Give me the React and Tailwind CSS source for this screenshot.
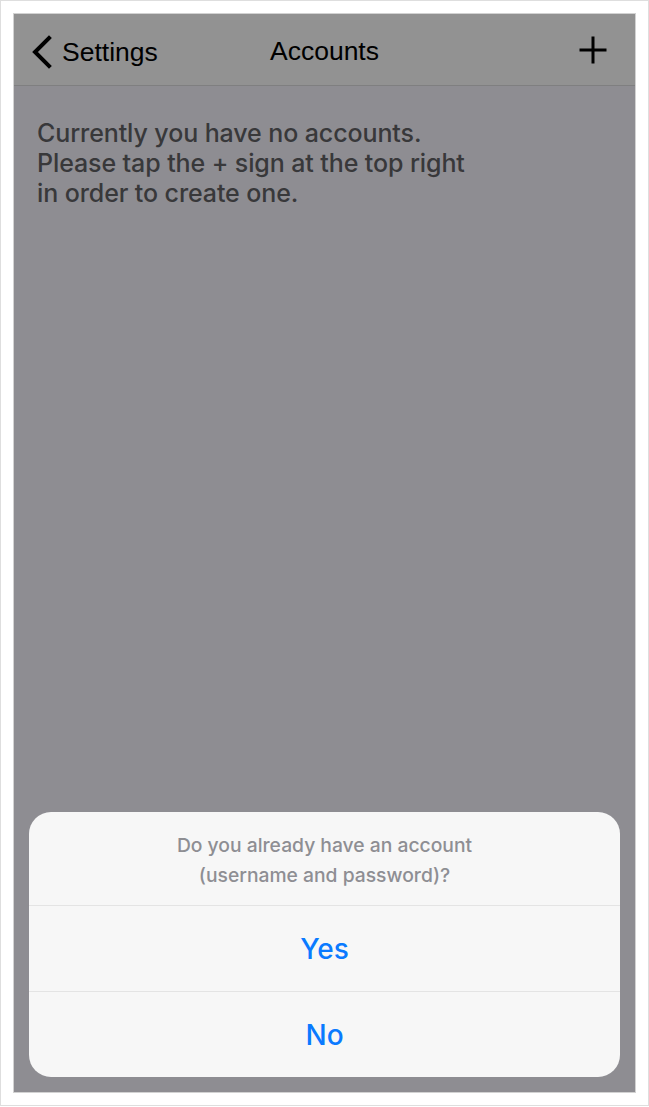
export default function App() {
  return (
    <div className="w-[649px] h-[1106px] bg-white border border-[#dedede] p-[12px]">
      <div className="h-full border border-[#d2d2d2] bg-[#8e8d92] flex flex-col">
        <div className="h-[72px] shrink-0 bg-[#929292] border-b border-[#7f7f80] grid grid-cols-[1fr_auto_1fr] items-center" style={{ fontFamily: '"Liberation Sans", Arial, sans-serif' }}>
          <div className="flex items-center pl-[18px] gap-[8px]">
            <svg width="22" height="34" viewBox="0 0 22 34" className="mt-[4px]">
              <polyline points="17,3 3,17 17,31" fill="none" stroke="#000" strokeWidth="4" strokeLinecap="square" strokeLinejoin="miter" />
            </svg>
            <span className="text-[26.5px] text-black leading-none mt-[5px]">Settings</span>
          </div>
          <div className="text-[26.5px] text-black leading-none mt-[4px]">Accounts</div>
          <div className="flex justify-end pr-[28px]">
            <svg width="28" height="28" viewBox="0 0 28 28">
              <line x1="0.5" y1="14" x2="27.5" y2="14" stroke="#000" strokeWidth="3" />
              <line x1="14" y1="0.5" x2="14" y2="27.5" stroke="#000" strokeWidth="3" />
            </svg>
          </div>
        </div>
        <div className="flex-1 flex flex-col" style={{ fontFamily: 'Inter, "Noto Sans", sans-serif' }}>
          <p className="pt-[32px] pl-[23px] text-[25px] leading-[30px] font-medium text-[#38383a] tracking-[-0.1px]">
            Currently you have no accounts.
            <br />
            Please tap the + sign at the top right
            <br />
            in order to create one.
          </p>
          <div className="flex-1" />
          <div className="mx-[15px] mb-[15px] bg-[#f7f7f7] rounded-[22px] overflow-hidden">
            <div className="pt-[18px] pb-[15px] text-center text-[19.3px] leading-[30px] font-medium text-[#8e8e93]">
              Do you already have an account
              <br />
              (username and password)?
            </div>
            <div className="h-[86px] border-t border-[#e4e4e4] flex items-center justify-center text-[28px] font-medium text-[#0a7aff]">Yes</div>
            <div className="h-[86px] border-t border-[#e4e4e4] flex items-center justify-center text-[28px] font-medium text-[#0a7aff]">No</div>
          </div>
        </div>
      </div>
    </div>
  );
}
